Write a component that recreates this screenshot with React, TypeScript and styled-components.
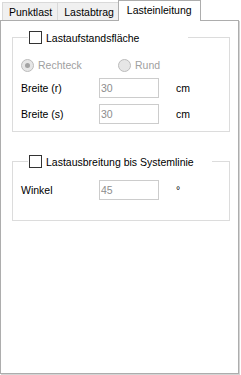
import styled, { createGlobalStyle } from "styled-components"

const GlobalStyle = createGlobalStyle`
	html, body {
		margin: 0;
		padding: 0;
		background: #ffffff;
	}
	body {
		font-family: "Liberation Sans", Arial, sans-serif;
		font-size: 10.5px;
		color: #000000;
	}
`

interface TabProps {
	active?: boolean
}

const Page = styled.div`
	width: 241px;
	height: 375px;
	display: flex;
	flex-direction: column;
`

const TabStrip = styled.div`
	display: flex;
	align-items: flex-end;
	height: 20px;
	padding-left: 2px;
`

const Tab = styled.div<TabProps>`
	position: relative;
	box-sizing: border-box;
	height: ${p => (p.active ? "21px" : "18px")};
	margin-bottom: ${p => (p.active ? "-1px" : "0")};
	margin-left: ${p => (p.active ? "-2px" : "-1px")};
	padding: ${p => (p.active ? "0 8px 0 8px" : "0 5px 0 6px")};
	display: flex;
	align-items: center;
	background: ${p => (p.active ? "#ffffff" : "#f0f0f0")};
	border: 1px solid ${p => (p.active ? "#adadad" : "#d9d9d9")};
	border-bottom: none;
	z-index: ${p => (p.active ? 2 : 1)};
	white-space: nowrap;
	padding-bottom: ${p => (p.active ? "2px" : "0")};

	&:first-child {
		margin-left: 0;
	}
`

const Panel = styled.div`
	box-sizing: border-box;
	width: 239px;
	height: 354px;
	border: 1px solid #adadad;
	box-shadow: 1px 1px 0 #d4d4d4;
	background: #ffffff;
	padding: 10px 8px 0 11px;
	display: flex;
	flex-direction: column;
`

const Group = styled.fieldset<{ gapTop?: number; bottom: number }>`
	margin: ${p => p.gapTop ?? 0}px 0 0 0;
	padding: 0 0 ${p => p.bottom}px 8px;
	border: 1px solid #dcdcdc;
	min-width: 0;
	display: flex;
	flex-direction: column;
`

const Legend = styled.legend<{ span: number }>`
	box-sizing: border-box;
	width: ${p => p.span}px;
	height: 13px;
	margin-left: 7px;
	padding: 0 0 0 1px;
	display: flex;
	align-items: center;
	gap: 4px;
`

const CheckBox = styled.span`
	box-sizing: border-box;
	width: 13px;
	height: 13px;
	border: 1px solid #333333;
	background: #ffffff;
	flex: none;
`

const RadioRow = styled.div`
	display: flex;
	align-items: center;
	height: 14px;
	margin-top: 14px;
`

const RadioItem = styled.div`
	display: flex;
	align-items: center;
	gap: 4px;
	width: 97px;
	color: #a0a0a0;
`

const RadioDot = styled.span<{ checked?: boolean }>`
	box-sizing: border-box;
	width: 13px;
	height: 13px;
	border-radius: 50%;
	border: 1px solid #bcbcbc;
	background: #e6e6e6;
	display: flex;
	align-items: center;
	justify-content: center;

	&::after {
		content: "";
		width: 5px;
		height: 5px;
		border-radius: 50%;
		background: ${p => (p.checked ? "#a3a3a3" : "transparent")};
	}
`

const FieldRow = styled.div<{ gapTop: number }>`
	display: grid;
	grid-template-columns: 78px 60px auto;
	align-items: center;
	height: 20px;
	margin-top: ${p => p.gapTop}px;
`

const Label = styled.span``

const TextBox = styled.div`
	box-sizing: border-box;
	height: 20px;
	border: 1px solid #cccccc;
	background: #ffffff;
	color: #8d8d8d;
	display: flex;
	align-items: center;
	padding-left: 1px;
`

const Unit = styled.span`
	margin-left: 17px;
`

const App = () => {
	return (
		<Page>
			<GlobalStyle />
			<TabStrip>
				<Tab>Punktlast</Tab>
				<Tab>Lastabtrag</Tab>
				<Tab active>Lasteinleitung</Tab>
			</TabStrip>
			<Panel>
				<Group bottom={7}>
					<Legend span={160}>
						<CheckBox />
						Lastaufstandsfläche
					</Legend>
					<RadioRow>
						<RadioItem>
							<RadioDot checked />
							Rechteck
						</RadioItem>
						<RadioItem>
							<RadioDot />
							Rund
						</RadioItem>
					</RadioRow>
					<FieldRow gapTop={6}>
						<Label>Breite (r)</Label>
						<TextBox>30</TextBox>
						<Unit>cm</Unit>
					</FieldRow>
					<FieldRow gapTop={6}>
						<Label>Breite (s)</Label>
						<TextBox>30</TextBox>
						<Unit>cm</Unit>
					</FieldRow>
				</Group>
				<Group gapTop={23} bottom={20}>
					<Legend span={184}>
						<CheckBox />
						Lastausbreitung bis Systemlinie
					</Legend>
					<FieldRow gapTop={12}>
						<Label>Winkel</Label>
						<TextBox>45</TextBox>
						<Unit>°</Unit>
					</FieldRow>
				</Group>
			</Panel>
		</Page>
	)
}

export default App
